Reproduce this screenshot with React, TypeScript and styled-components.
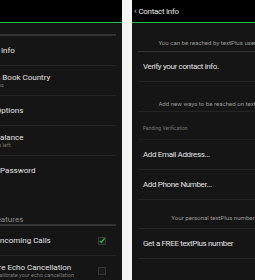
import React from 'react';
import styled, { createGlobalStyle } from 'styled-components';

const Page = createGlobalStyle`
  html, body {
    margin: 0;
    padding: 0;
    background: #f4f4f4;
    overflow: hidden;
  }
  body {
    font-family: Roboto, 'Noto Sans', 'Liberation Sans', sans-serif;
  }
`;

const Frame = styled.div`
  display: flex;
  gap: 10px;
  width: 255px;
  height: 280px;
  overflow: hidden;
  background: #f4f4f4;
`;

// each phone screen is wider than the slice of it that shows
const Crop = styled.div<{ $side: 'left' | 'right' }>`
  display: flex;
  justify-content: ${(p) => (p.$side === 'left' ? 'flex-end' : 'flex-start')};
  flex: ${(p) => (p.$side === 'left' ? '0 0 122px' : '1 1 0')};
  min-width: 0;
  overflow: hidden;
`;

const Phone = styled.div`
  flex-shrink: 0;
  width: 162px;
  height: 280px;
  background: #151515;
  color: #e2e2e2;
`;

const TopBar = styled.div`
  display: flex;
  align-items: center;
  gap: 2px;
  height: 22px;
  padding-left: 2px;
  background: #000;
  border-bottom: 1px solid #1fc04a;
  font-size: 8px;
  letter-spacing: -0.3px;
  color: #e6e6e6;
`;

const Chevron = styled.span`
  font-size: 9px;
  color: #bbb;
`;

const Header = styled.div<{ $gap?: number }>`
  display: flex;
  align-items: flex-end;
  height: 13px;
  margin: ${(p) => p.$gap ?? 0}px 6px 0;
  box-sizing: border-box;
  border-bottom: 2px solid #333;
  font-size: 8px;
  line-height: 9px;
  color: #8a8a8a;
  white-space: nowrap;
`;

const Row = styled.div<{ $last?: boolean; $tight?: boolean }>`
  display: flex;
  align-items: center;
  justify-content: space-between;
  height: 30px;
  margin: 0 6px;
  padding: 0 5px;
  box-sizing: border-box;
  border-bottom: 1px solid ${(p) => (p.$last ? 'transparent' : '#242424')};
  letter-spacing: ${(p) => (p.$tight ? '-0.35px' : '0')};
  white-space: nowrap;
`;

const Texts = styled.div`
  display: flex;
  flex-direction: column;
`;

const Title = styled.span`
  font-size: 8px;
  line-height: 9px;
  color: #e2e2e2;
`;

const Sub = styled.span`
  font-size: 5.5px;
  line-height: 7px;
  color: #7a7a7a;
`;

const Note = styled.div<{ $h: number; $pb: number; $strong?: boolean }>`
  display: flex;
  align-items: flex-end;
  justify-content: center;
  height: ${(p) => p.$h}px;
  margin: 0 6px;
  padding-bottom: ${(p) => p.$pb}px;
  box-sizing: border-box;
  border-bottom: 1px solid ${(p) => (p.$strong ? '#333' : '#242424')};
  font-size: 6.1px;
  color: #9a9a9a;
  white-space: nowrap;
`;

const SmallHeader = styled.div`
  display: flex;
  align-items: center;
  height: 28px;
  margin: 0 6px;
  padding: 4px 5px 0;
  box-sizing: border-box;
  border-bottom: 1px solid #1e1e1e;
  font-size: 5px;
  color: #777;
`;

const Box = styled.span<{ $on?: boolean }>`
  display: flex;
  align-items: center;
  justify-content: center;
  width: 8px;
  height: 8px;
  margin-right: 5px;
  box-sizing: border-box;
  border: 1px solid ${(p) => (p.$on ? '#3a3a3a' : '#333')};
  background: #1a1a1a;
`;

const Check = ({ on }: { on?: boolean }) => (
  <Box $on={on}>
    {on && (
      <svg width="8" height="7" viewBox="0 0 8 7">
        <path d="M1 4 L3 6 L7.5 0.8" fill="none" stroke="#22c04a" strokeWidth="1.8" />
      </svg>
    )}
  </Box>
);

const SettingsScreen = () => (
  <Phone>
    <TopBar>
      <Chevron>‹</Chevron>
      Settings
    </TopBar>
    <Header>Account</Header>
    <Row>
      <Title>Contact Info</Title>
    </Row>
    <Row>
      <Texts>
        <Title>Address Book Country</Title>
        <Sub>United States</Sub>
      </Texts>
    </Row>
    <Row>
      <Title>Sound Options</Title>
    </Row>
    <Row>
      <Texts>
        <Title>Wallet Balance</Title>
        <Sub>500 minutes left</Sub>
      </Texts>
    </Row>
    <Row $last>
      <Title>Change Password</Title>
    </Row>
    <Header $gap={27}>Calling Features</Header>
    <Row>
      <Title>Accept Incoming Calls</Title>
      <Check on />
    </Row>
    <Row $last>
      <Texts>
        <Title>Hardware Echo Cancellation</Title>
        <Sub>Let phone calibrate your echo cancellation</Sub>
      </Texts>
      <Check />
    </Row>
  </Phone>
);

const ContactScreen = () => (
  <Phone>
    <TopBar>
      <Chevron>‹</Chevron>
      Contact Info
    </TopBar>
    <Note $h={29} $pb={5} $strong>
      You can be reached by textPlus users at:
    </Note>
    <Row $tight>
      <Title>Verify your contact info.</Title>
    </Row>
    <Note $h={30} $pb={4}>
      Add new ways to be reached on textPlus
    </Note>
    <SmallHeader>Pending Verification</SmallHeader>
    <Row $tight>
      <Title>Add Email Address...</Title>
    </Row>
    <Row $tight>
      <Title>Add Phone Number...</Title>
    </Row>
    <Note $h={29} $pb={7}>
      Your personal textPlus number
    </Note>
    <Row $tight>
      <Title>Get a FREE textPlus number</Title>
    </Row>
  </Phone>
);

export default function App() {
  return (
    <>
      <Page />
      <Frame>
        <Crop $side="left">
          <SettingsScreen />
        </Crop>
        <Crop $side="right">
          <ContactScreen />
        </Crop>
      </Frame>
    </>
  );
}
